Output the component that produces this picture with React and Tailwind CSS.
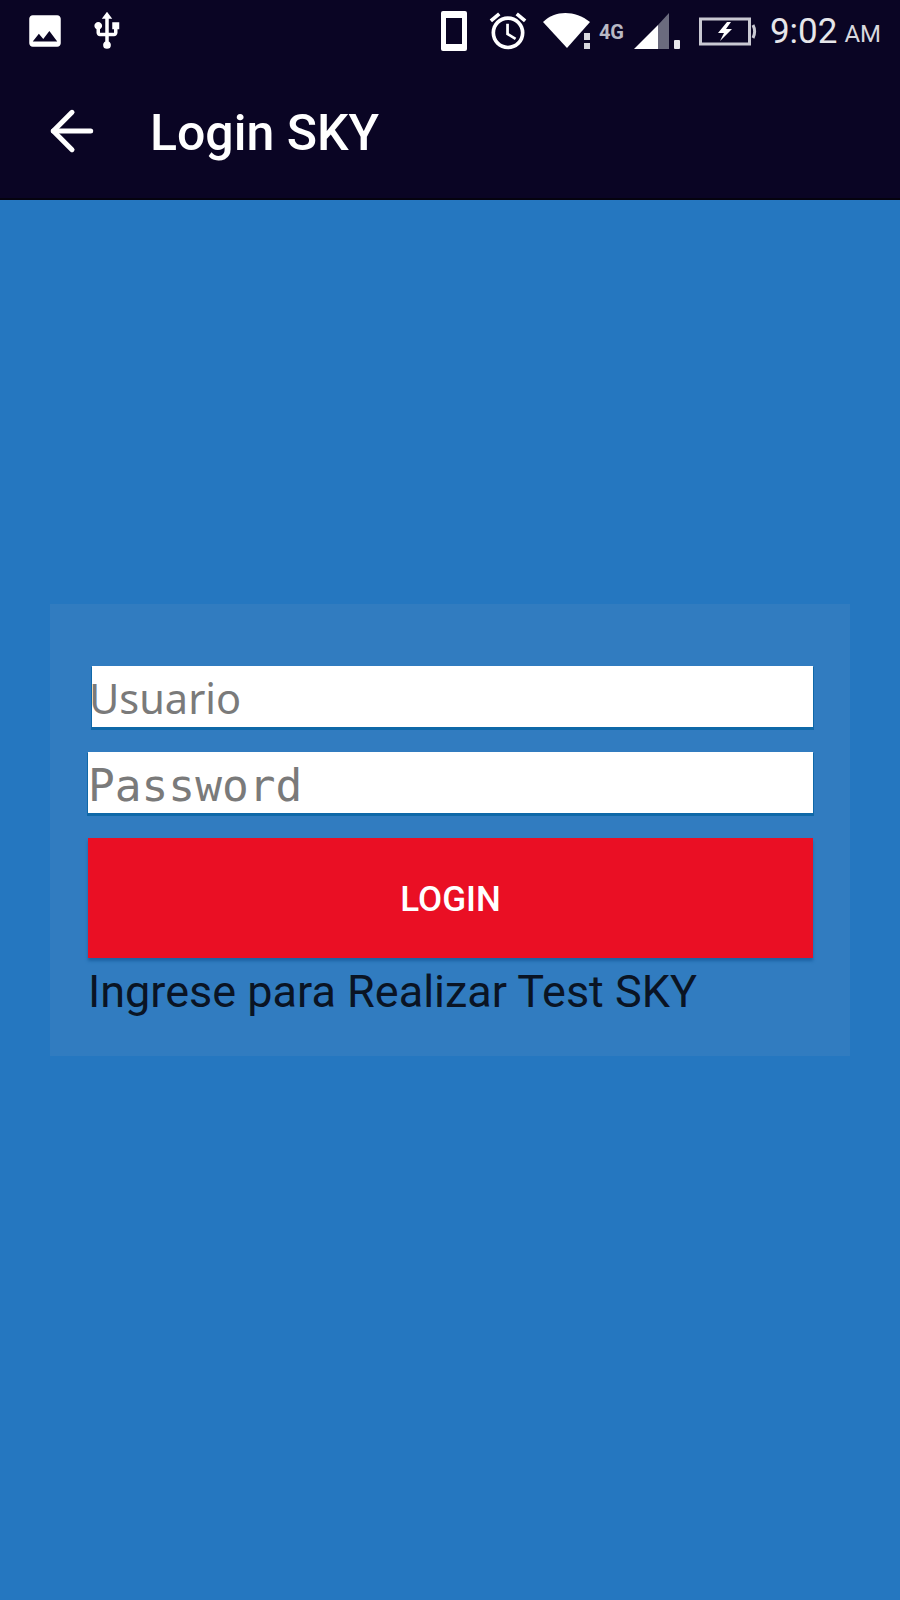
import { MdImage, MdUsb, MdAccessAlarm } from 'react-icons/md';
import { ArrowLeft } from 'lucide-react';

const PhoneIcon = () => (
  <svg viewBox="0 0 26 40" className="w-[26px] h-[40px]">
    <rect width="26" height="40" rx="2" fill="#ffffff" />
    <rect x="5" y="7" width="16" height="26" fill="#0a0524" />
  </svg>
);

const SignalIcon = () => (
  <svg viewBox="0 0 46 36" className="w-[46px] h-[36px] ml-[7px]">
    <path d="M0 36 L24 12 V36 Z" fill="#ffffff" />
    <path d="M24 12 L35 0 V36 H24 Z" fill="#6b6b7e" />
    <rect x="40" y="27" width="6" height="9" rx="1" fill="#e8e8ec" />
  </svg>
);

const WifiIcon = () => (
  <svg viewBox="0 0 48 36" className="w-[48px] h-[36px] ml-[13px]">
    <path d="M0 9 C12 -3 32 -3 47 9 L24 35 Z" fill="#ffffff" />
    <rect x="41" y="20" width="6" height="7" fill="#d8d8de" />
    <rect x="41" y="30" width="6" height="6" fill="#d8d8de" />
  </svg>
);

const BatteryIcon = () => (
  <svg viewBox="0 0 58 30" className="w-[58px] h-[30px] ml-[19px]">
    <rect x="1.5" y="3" width="49" height="25" fill="none" stroke="#c9c9d2" strokeWidth="3" />
    <path d="M54 9 C56 13 56 18 54 22" fill="none" stroke="#c9c9d2" strokeWidth="3" />
    <path d="M28 6 L19 17 H25 L21 25 L33 13 H27 L32 6 Z" fill="#ffffff" />
  </svg>
);

const StatusBar = () => (
  <div className="h-[62px] flex items-center text-white">
    <MdImage className="text-[42px] ml-[24px]" />
    <MdUsb className="text-[42px] ml-[20px]" />
    <div className="ml-auto flex items-center">
      <PhoneIcon />
      <MdAccessAlarm className="text-[44px] ml-[19px]" />
      <WifiIcon />
      <span className="self-start mt-[13px] ml-[8px] w-[28px] text-[20px] leading-[20px] font-bold text-[#b9b9c4]">4G</span>
      <SignalIcon />
      <BatteryIcon />
      <span className="ml-[13px] text-[35px] leading-none text-[#e6e6ea]">9:02</span>
      <span className="ml-[7px] mr-[19px] mt-[6px] text-[24px] leading-none text-[#d8d8de]">AM</span>
    </div>
  </div>
);

const App = () => {
  return (
    <div className="min-h-[1600px] bg-[#2577c0] font-['Roboto',sans-serif]">
      {/* Header */}
      <div className="h-[200px] bg-[#0a0524] border-b-2 border-[#05030f]">
        <StatusBar />
        <div className="flex items-center h-[138px] text-white">
          <ArrowLeft size={64} strokeWidth={1.9} className="ml-[40px]" />
          <h1 className="ml-[46px] mt-[4px] text-[50px] font-medium leading-none">Login SKY</h1>
        </div>
      </div>

      {/* Login panel */}
      <div className="mt-[404px] mx-[50px] h-[452px] bg-[#317cc0] pl-[38px] pr-[37px] pt-[62px]">
        <div className="ml-[4px] h-[61px] bg-white shadow-[0_2px_0_1px_#0f68a8] font-['Noto_Sans',sans-serif] text-[41.5px] leading-[64px] text-[#7a7a7a] -indent-[3px]">
          Usuario
        </div>
        <div className="mt-[25px] h-[61px] bg-white shadow-[0_2px_0_1px_#0f68a8] font-['DejaVu_Sans_Mono',monospace] text-[44.5px] leading-[67px] text-[#7a7a7a]">
          Password
        </div>
        <button className="mt-[25px] w-full h-[120px] pt-[4px] bg-[#ea0f24] shadow-[0_3px_3px_#1c63a3] text-white text-[35px] font-medium">
          LOGIN
        </button>
        <p className="mt-[8px] text-[45px] leading-[52px] text-[#0a1424]">Ingrese para Realizar Test SKY</p>
      </div>
    </div>
  );
};

export default App;
